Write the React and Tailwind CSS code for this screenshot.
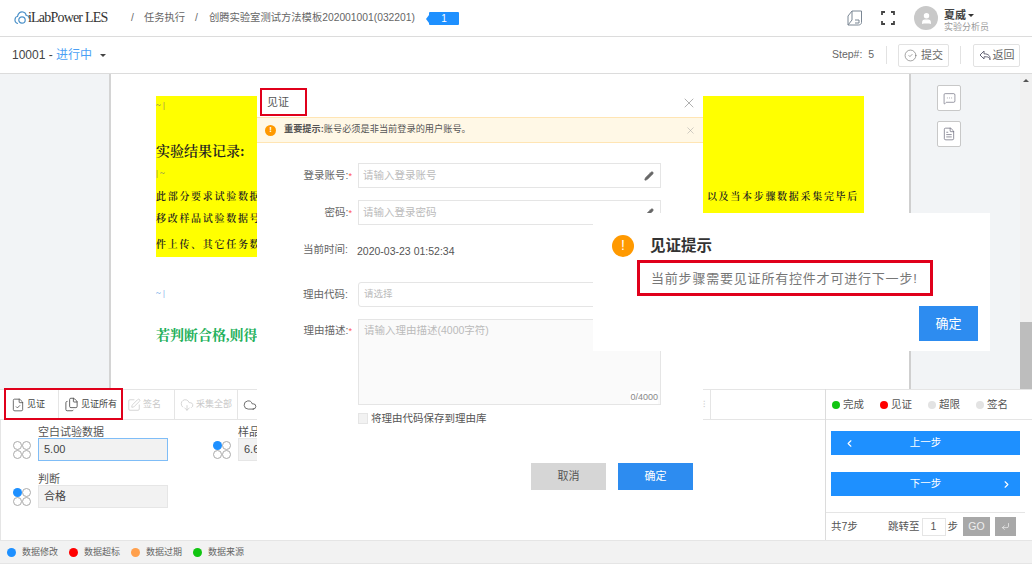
import React from "react";
import { X, Pencil, ChevronLeft, ChevronRight, CircleCheck, MessageSquareMore, FileText, FileCheck, Files, SquarePen, CloudDownload, Cloud, CornerDownLeft, User } from "lucide-react";

const FONT = "[font-family:'Liberation_Sans','Noto_Sans_CJK_SC',sans-serif]";

function Logo() {
  return (
    <div className="flex items-center ml-[14px] w-[100px] shrink-0 whitespace-nowrap">
      <svg width="17" height="16" viewBox="0 0 17 16" fill="none" stroke="#4a90c8" strokeWidth="1.2" className="shrink-0">
        <path d="M4 13.500C1.500 13.500 .8 11 1 9.500 1.200 7.500 2.500 6.500 3.500 6.500 4 3 6.500 1.500 9 2c2.200.5 3 2 3.200 3.500 1.800 0 3 1.500 3 3" />
        <circle cx="8" cy="10" r="3.200" />
      </svg>
      <span className="[font-family:'Liberation_Serif',serif] text-[14px] leading-none text-[#333] ml-[-3px] tracking-[-0.8px]">iLabPower LES</span>
    </div>
  );
}

function Header() {
  return (
    <div className="flex items-center h-[37px] border-b border-[#dcdcdc] shrink-0 bg-white text-[10.300px] text-[#666]">
      <Logo />
      <span className="ml-[17px]">/</span>
      <span className="ml-[10px]">任务执行</span>
      <span className="ml-[10px]">/</span>
      <span className="ml-[11px]">创腾实验室测试方法模板202001001(032201)</span>
      <div className="ml-[14px] relative w-[30px] h-[13px] bg-[#1e90ff] rounded-[1px] text-white text-[10px] flex items-center justify-center">
        1
        <span className="absolute left-[-3px] top-[3px] w-0 h-0 border-y-[4px] border-y-transparent border-r-[3px] border-r-[#1e90ff]" />
      </div>
      <div className="ml-auto flex items-center mr-[44px]">
        <svg width="16" height="16" viewBox="0 0 16 16" fill="none" stroke="#7b8794" strokeWidth="1">
          <path d="M1 15V6l4-5h9.500v11.500M1 15h10.500c1.500 0 3-1 3-2.500M5 1v9l-4 5M8 10h4v3H8" />
        </svg>
        <svg className="ml-[18px]" width="14" height="14" viewBox="0 0 14 14" fill="none" stroke="#444" strokeWidth="1.800">
          <path d="M1 4V1h3M10 1h3v3M13 10v3h-3M4 13H1v-3" />
        </svg>
        <div className="ml-[19px] w-[24px] h-[24px] rounded-full bg-[#c9c9c9] flex items-center justify-center">
          <User size={13} color="#fff" fill="#fff" />
        </div>
        <div className="ml-[6px] w-[44px] flex flex-col leading-none pt-[5px]">
          <span className="text-[11px] font-bold text-[#444] flex items-center">夏威<span className="ml-[2px] w-0 h-0 border-x-[3px] border-x-transparent border-t-[3px] border-t-[#333]" /></span>
          <span className="text-[9px] text-[#999] mt-[2px] whitespace-nowrap">实验分析员</span>
        </div>
      </div>
    </div>
  );
}

function SubBar() {
  return (
    <div className="flex items-center h-[37px] border-b border-[#dcdcdc] shrink-0 bg-white">
      <span className="ml-[12px] text-[12px] text-[#444]">10001 - <span className="text-[#4a9ff5]">进行中</span></span>
      <span className="ml-[8px] w-0 h-0 border-x-[3px] border-x-transparent border-t-[3px] border-t-[#444]" />
      <div className="ml-auto flex items-center text-[10.500px] text-[#666] pr-[12px]">
        <span>Step#:&nbsp;&nbsp;5</span>
        <span className="ml-[12px] h-[18px] w-px bg-[#e2e2e2]" />
        <div className="ml-[11px] w-[51px] h-[23px] border border-[#e2e2e2] rounded-[2px] flex items-center justify-center gap-[4px] text-[11px]">
          <CircleCheck size={13} strokeWidth={1.1} />提交
        </div>
        <span className="ml-[11px] h-[18px] w-px bg-[#e2e2e2]" />
        <div className="ml-[12px] w-[47px] h-[23px] border border-[#e2e2e2] rounded-[2px] flex items-center justify-center gap-[2px] text-[11px]">
          <svg width="12" height="11" viewBox="0 0 12 11" fill="none" stroke="#667" strokeWidth="1" strokeLinejoin="round">
            <path d="M5 1 1 5l4 4V6.800h2.500c2 0 3 1 3.500 3 .3-3.500-1-6-6-6z" />
          </svg>
          返回
        </div>
      </div>
    </div>
  );
}

function DocLine({ children, className }) {
  return <div className={`whitespace-nowrap ${className}`}>{children}</div>;
}

function Document() {
  const serif = "[font-family:'Liberation_Serif','Noto_Serif_CJK_SC','Noto_Sans_CJK_SC',serif]";
  const tiny = "text-[10px] font-semibold text-[#222] tracking-[1.700px]";
  return (
    <div className={`flex-1 bg-white pl-[45px] pr-[45px] pt-[22px] ${serif}`}>
      <div className="bg-[#ffff00] h-[161px] relative overflow-hidden">
        <DocLine className="text-[9px] text-[#667] pt-[3px] leading-[12px]">~ |</DocLine>
        <DocLine className="text-[14px] font-semibold text-[#222] mt-[31px] leading-[20px]">实验结果记录:</DocLine>
        <DocLine className="text-[9px] text-[#667] mt-[5px] leading-[12px]">| ~</DocLine>
        <div className={`mt-[7px] leading-[22px] flex justify-between pr-[5px] ${tiny}`}>
          <span>此部分要求试验数据</span>
          <span>以及当本步骤数据采集完毕后</span>
        </div>
        <DocLine className={`leading-[22px] ${tiny}`}>移改样品试验数据号</DocLine>
        <DocLine className={`leading-[29px] ${tiny}`}>件上传、其它任务数</DocLine>
      </div>
      <DocLine className="text-[9px] text-[#4a90e2] mt-[30px] leading-[12px]">~ |</DocLine>
      <DocLine className="text-[14px] font-bold text-[#22b05a] mt-[27px] leading-[20px]">若判断合格,则得出</DocLine>
    </div>
  );
}

function Circles({ filled }) {
  const c = "w-[9px] h-[9px] rounded-full border border-[#aaa]";
  return (
    <div className="grid grid-cols-2 w-[18px] shrink-0">
      <span className={filled ? "w-[9px] h-[9px] rounded-full bg-[#1e90ff]" : c} />
      <span className={c} />
      <span className={c} />
      <span className={c} />
    </div>
  );
}

function Field({ label, value, filled, active, width = "w-[130px]" }) {
  return (
    <div className="flex items-end">
      <div className="pb-[2px] mr-[7px]"><Circles filled={filled} /></div>
      <div>
        <div className="text-[11px] leading-[13px] text-[#555] mb-[-1px]">{label}</div>
        <div className={`${width} h-[23px] bg-[#f2f2f2] border ${active ? "border-[#7fbdf7]" : "border-[#e6e6e6]"} flex items-center pl-[5px] text-[11px] text-[#444]`}>{value}</div>
      </div>
    </div>
  );
}

function ToolBtn({ icon, label, className, disabled }) {
  return (
    <div className={`h-full flex items-center gap-[2px] text-[9px] shrink-0 ${disabled ? "text-[#c9c9c9]" : "text-[#444]"} ${className}`}>
      {icon}<span>{label}</span>
    </div>
  );
}

function BottomLeft() {
  return (
    <div className="flex-1 flex flex-col">
      <div className="h-[31px] border-y border-[#e5e5e5] flex items-center pl-[5px] shrink-0">
        <ToolBtn className="w-[54px] pl-[6px] border-r border-[#e5e5e5]" label="见证" icon={<FileCheck size={14} strokeWidth={1.3} />} />
        <ToolBtn className="w-[63px] pl-[5px] border-r border-[#e5e5e5]" label="见证所有" icon={<Files size={15} strokeWidth={1.3} />} />
        <ToolBtn disabled className="w-[53px] pl-[5px] border-r border-[#e5e5e5]" label="签名" icon={<SquarePen size={14} strokeWidth={1.3} />} />
        <ToolBtn disabled className="w-[63px] pl-[5px] border-r border-[#e5e5e5]" label="采集全部" icon={<CloudDownload size={14} strokeWidth={1.3} />} />
        <div className="w-[473px] h-full flex items-center justify-between pl-[5px] pr-[5px] border-r border-[#e5e5e5] text-[#ccc] text-[9px]">
          <Cloud size={14} strokeWidth={1.3} color="#444" />
          <span>⁝</span>
        </div>
      </div>
      <div className="flex-1 pl-[12px] pt-[6px] border-l border-[#e5e5e5]">
        <div className="flex">
          <Field label="空白试验数据" value="5.00" active />
          <div className="ml-[45px]"><Field label="样品" value="6.6" filled width="w-[100px]" /></div>
        </div>
        <div className="mt-[12px]"><Field label="判断" value="合格" filled /></div>
      </div>
    </div>
  );
}

function Dot({ color, label }) {
  return (
    <span className="flex items-center gap-[3px] w-[48px]">
      <span className="w-[8px] h-[8px] rounded-full" style={{ background: color }} />
      {label}
    </span>
  );
}

function BottomRight() {
  return (
    <div className="w-[207px] shrink-0 border-l border-[#dcdcdc] flex flex-col text-[10.500px] text-[#555]">
      <div className="h-[31px] border-y border-[#e5e5e5] flex items-center pl-[6px] shrink-0">
        <Dot color="#11c511" label="完成" />
        <Dot color="#ff0000" label="见证" />
        <Dot color="#e3e3e3" label="超限" />
        <Dot color="#e3e3e3" label="签名" />
      </div>
      <div className="pl-[5px] pr-[5px] pt-[11px] h-[93px] shrink-0 border-b border-[#e5e5e5] mr-[7px]">
        <div className="h-[24px] bg-[#1e90ff] text-white flex items-center justify-center relative">
          <ChevronLeft size={11} strokeWidth={2.5} className="absolute left-[13px]" />上一步
        </div>
        <div className="h-[24px] bg-[#1e90ff] text-white flex items-center justify-center relative mt-[17px]">
          下一步<ChevronRight size={11} strokeWidth={2.5} className="absolute right-[8px]" />
        </div>
      </div>
      <div className="flex items-center pl-[5px] pt-[4px]">
        <span className="w-[57px]">共7步</span>
        <span>跳转至</span>
        <span className="ml-[2px] w-[24px] h-[18px] border border-[#e5e5e5] flex items-center justify-center">1</span>
        <span className="ml-[2px]">步</span>
        <span className="ml-[5px] w-[27px] h-[19px] bg-[#a8a8a8] text-[#eee] flex items-center justify-center">GO</span>
        <span className="ml-[5px] w-[21px] h-[19px] bg-[#a8a8a8] text-[#eee] flex items-center justify-center"><CornerDownLeft size={9} /></span>
      </div>
    </div>
  );
}

function Legend() {
  const items = [["#1e90ff", "数据修改"], ["#ff0000", "数据超标"], ["#ffa04d", "数据过期"], ["#11c511", "数据来源"]];
  return (
    <div className="h-[24px] shrink-0 bg-[#f2f2f2] border-y border-[#e5e5e5] flex items-center pl-[7px] gap-[11px] text-[9px] text-[#666]">
      {items.map(([c, l]) => (
        <span key={l} className="flex items-center gap-[6px]">
          <span className="w-[9px] h-[9px] rounded-full" style={{ background: c }} />
          <span className="pt-[2px]">{l}</span>
        </span>
      ))}
    </div>
  );
}

function FormRow({ label, required, children, className }) {
  return (
    <div className={`flex items-center ${className}`}>
      <div className="w-[96px] text-right text-[10.500px] text-[#666] pr-[1px] pt-[1px]">
        {label}:{required ? <span className="text-[#f55] text-[9px]">*</span> : <span className="inline-block w-[4px]" />}
      </div>
      <div className="ml-[5px]">{children}</div>
    </div>
  );
}

function Modal() {
  return (
    <div className="absolute left-[257px] top-[85px] w-[446px] h-[435px] bg-white flex flex-col text-[#555]">
      <div className="h-[32px] flex items-center relative shrink-0">
        <span className="absolute left-[3px] top-[3px] w-[47px] h-[28px] border-2 border-[#e0001b]" />
        <span className="ml-[10px] text-[11px] text-[#555] pt-[2px]">见证</span>
        <X size={16} strokeWidth={1} color="#888" className="absolute right-[6px] top-[10px]" />
      </div>
      <div className="h-[26px] bg-[#fff8e6] border-y border-[#ffe5b4] flex items-center relative shrink-0">
        <span className="ml-[8px] w-[11px] h-[11px] rounded-full bg-[#ff9900] text-white text-[8px] font-bold flex items-center justify-center">!</span>
        <span className="ml-[8px] text-[9.200px] text-[#555]"><b>重要提示:</b>账号必须是非当前登录的用户账号。</span>
        <X size={11} strokeWidth={1} color="#999" className="absolute right-[7px] top-[7px]" />
      </div>
      <FormRow label="登录账号" required className="mt-[20px]">
        <div className="w-[303px] h-[25px] border border-[#e5e5e5] flex items-center justify-between px-[4px] text-[10.500px] text-[#bbb]">
          请输入登录账号<Pencil size={10} color="#666" fill="#666" className="mr-[2px]" />
        </div>
      </FormRow>
      <FormRow label="密码" required className="mt-[12px]">
        <div className="w-[303px] h-[25px] border border-[#e5e5e5] flex items-center justify-between px-[4px] text-[10.500px] text-[#bbb]">
          请输入登录密码<Pencil size={10} color="#666" fill="#666" className="mr-[2px]" />
        </div>
      </FormRow>
      <FormRow label="当前时间" className="mt-[12px] h-[25px]">
        <span className="text-[10.500px] text-[#555] ml-[-1px]">2020-03-23 01:52:34</span>
      </FormRow>
      <FormRow label="理由代码" className="mt-[20px]">
        <div className="w-[303px] h-[25px] border border-[#e5e5e5] rounded-[3px] flex items-center px-[5px] text-[9.500px] text-[#bbb]">请选择</div>
      </FormRow>
      <div className="flex mt-[12px]">
        <div className="w-[96px] text-right text-[10.500px] text-[#666] pr-[1px] pt-[4px]">理由描述:<span className="text-[#f55] text-[9px]">*</span></div>
        <div className="ml-[5px] w-[303px] h-[86px] bg-[#fafafa] border border-[#e5e5e5] pl-[5px] pt-[3px] text-[10.500px] text-[#bbb] relative">
          请输入理由描述(4000字符)
          <span className="absolute right-[2px] bottom-0 text-[9px] text-[#888] bg-white">0/4000</span>
        </div>
      </div>
      <div className="ml-[101px] mt-[6px] flex items-center text-[10.500px] text-[#555]">
        <span className="w-[10px] h-[11px] bg-[#f2f2f2] border border-[#e5e5e5] mr-[3px]" />
        将理由代码保存到理由库
      </div>
      <div className="mt-[36px] ml-[274px] flex gap-[12px] text-[11px]">
        <div className="w-[75px] h-[27px] bg-[#d6d6d6] text-[#555] flex items-center justify-center">取消</div>
        <div className="w-[75px] h-[27px] bg-[#2d8cf0] text-white flex items-center justify-center">确定</div>
      </div>
    </div>
  );
}

function Popup() {
  return (
    <div className="absolute left-[593px] top-[213px] w-[397px] h-[138px] bg-white">
      <div className="flex items-center pl-[19px] pt-[21px]">
        <span className="w-[22px] h-[22px] rounded-full bg-[#ff9900] text-white text-[14px] flex items-center justify-center">!</span>
        <span className="ml-[16px] text-[15.500px] leading-[22px] pt-[1px] font-bold text-[#333]">见证提示</span>
      </div>
      <div className="ml-[44px] mt-[3px] w-[296px] h-[36px] border-[3px] border-[#e0001b] flex items-center pl-[11px] pt-[1px] text-[13px] tracking-[0.800px] text-[#777] whitespace-nowrap">
        当前步骤需要见证所有控件才可进行下一步!
      </div>
      <div className="flex justify-end pr-[12px] mt-[10px]">
        <div className="w-[59px] h-[35px] bg-[#2d8cf0] text-white text-[13px] flex items-center justify-center">确定</div>
      </div>
    </div>
  );
}

export default function App() {
  return (
    <div className={`relative w-[1032px] h-[564px] overflow-hidden flex flex-col bg-white ${FONT}`}>
      <Header />
      <SubBar />
      <div className="flex h-[315px] shrink-0">
        <div className="w-[111px] bg-[#f2f4f6] border-r-2 border-[#d4d4d4] shrink-0" />
        <Document />
        <div className="w-[111px] shrink-0 bg-[#f2f4f6] border-l-2 border-[#cfcfcf] flex flex-col items-center pt-[11px] pr-[33px]">
          <div className="w-[24px] h-[26px] bg-white border border-[#c8c8c8] rounded-[2px] flex items-center justify-center"><MessageSquareMore size={13} strokeWidth={1.2} color="#667" /></div>
          <div className="w-[24px] h-[26px] bg-white border border-[#c8c8c8] rounded-[2px] flex items-center justify-center mt-[10px]"><FileText size={14} strokeWidth={1.2} color="#667" /></div>
        </div>
        <div className="w-[12px] shrink-0 bg-[#f1f1f1] flex flex-col items-center justify-between">
          <span className="mt-[5px] w-0 h-0 border-x-[3px] border-x-transparent border-b-[3px] border-b-[#555]" />
          <span className="w-full h-[67px] bg-[#bdbdbd]" />
        </div>
      </div>
      <div className="flex flex-1 min-h-0">
        <BottomLeft />
        <BottomRight />
      </div>
      <Legend />
      <span className="absolute left-[4px] top-[388px] w-[119px] h-[32px] border-2 border-[#e0001b]" />
      <Modal />
      <Popup />
    </div>
  );
}
